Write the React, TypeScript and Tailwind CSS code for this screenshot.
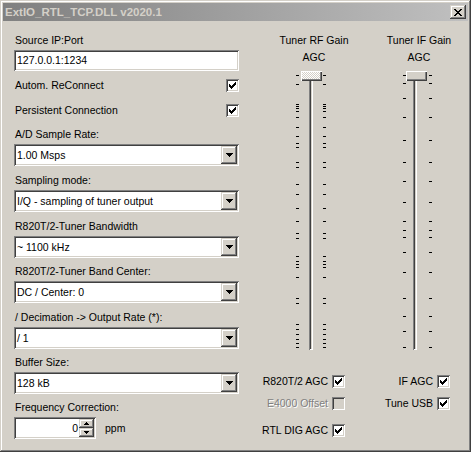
import type { ReactNode } from 'react';

const SUNKEN = 'shadow-[inset_1px_1px_#808080,inset_-1px_-1px_#ffffff,inset_2px_2px_#404040,inset_-2px_-2px_#d4d0c8]';
const RAISED = 'shadow-[inset_-1px_-1px_#404040,inset_1px_1px_#d4d0c8,inset_-2px_-2px_#808080,inset_2px_2px_#ffffff]';

// classic 7x7 check mark, one 3px column per x
const CHECK_PATH = [2, 3, 4, 3, 2, 1, 0].map((r, i) => `M${i} ${r}h1v3h-1z`).join('');

// tick marks as page y, the slider starts at y=70
const RF_TICKS = [75, 84, 104, 106, 108, 111, 117, 127, 136, 143, 147, 162, 167, 184, 194, 208, 221, 233, 238, 256, 261, 264, 267, 277, 298, 303, 324, 329, 334, 339, 343, 347];
const IF_TICKS = [75, 83, 98, 117, 140, 162, 181, 202, 221, 230, 237, 252, 272, 298, 316, 331, 347];

function Check({ on = true, disabled = false }: { on?: boolean; disabled?: boolean }) {
    return (
        <span className={`flex h-[13px] w-[13px] shrink-0 items-center justify-center ${disabled ? 'bg-[#d4d0c8]' : 'bg-white'} ${SUNKEN}`}>
            {on && (
                <svg width="7" height="7" viewBox="0 0 7 7" shapeRendering="crispEdges">
                    <path d={CHECK_PATH} fill="#000" />
                </svg>
            )}
        </span>
    );
}

function Label({ children, className = '' }: { children: ReactNode; className?: string }) {
    return <div className={`h-[13px] pl-[1px] whitespace-nowrap ${className}`}>{children}</div>;
}

function Select({ value }: { value: string }) {
    return (
        <div className={`mt-[3px] flex h-[22px] w-[225px] items-center bg-white p-[2px] ${SUNKEN}`}>
            <span className="flex-1 truncate pl-[1px]">{value}</span>
            <span className={`flex h-[18px] w-[16px] items-center justify-center bg-[#d4d0c8] ${RAISED}`}>
                <svg width="7" height="4" viewBox="0 0 7 4" shapeRendering="crispEdges">
                    <path d="M0 0h7v1H0zM1 1h5v1H1zM2 2h3v1H2zM3 3h1v1H3z" fill="#000" />
                </svg>
            </span>
        </div>
    );
}

function Field({ label, value, className = '' }: { label: string; value: string; className?: string }) {
    return (
        <div className={`flex flex-col ${className}`}>
            <Label>{label}</Label>
            <Select value={value} />
        </div>
    );
}

function SpinButton({ up }: { up?: boolean }) {
    return (
        <span className={`flex h-[9px] w-[15px] items-center justify-center bg-[#d4d0c8] ${RAISED}`}>
            <svg width="5" height="3" viewBox="0 0 5 3" shapeRendering="crispEdges">
                <path d={up ? 'M2 0h1v1H2zM1 1h3v1H1zM0 2h5v1H0z' : 'M0 0h5v1H0zM1 1h3v1H1zM2 2h1v1H2z'} fill="#000" />
            </svg>
        </span>
    );
}

type TrackbarProps = {
    ticks: number[];
    hatched?: boolean;
    className: string;
    thumbClass: string;
    trackClass: string;
    rightTickClass: string;
};

function Trackbar({ ticks, hatched, className, thumbClass, trackClass, rightTickClass }: TrackbarProps) {
    return (
        <div className={`relative h-[282px] w-[30px] ${className}`}>
            <div className={`absolute top-[3px] h-[277px] w-[4px] bg-[#d4d0c8] ${trackClass} ${SUNKEN}`} />
            {ticks.map((y) => (
                <div key={y}>
                    <div className="absolute left-0 h-[1px] w-[3px] bg-black" style={{ top: y - 70 }} />
                    <div className={`absolute h-[1px] w-[3px] bg-black ${rightTickClass}`} style={{ top: y - 70 }} />
                </div>
            ))}
            <div
                className={`absolute top-[1px] h-[10px] w-[21px] ${thumbClass} ${
                    hatched
                        ? 'bg-[image:repeating-conic-gradient(#ffffff_0%_25%,#d4d0c8_0%_50%)] bg-[length:2px_2px]'
                        : 'bg-[#d4d0c8]'
                } shadow-[inset_1px_1px_#ffffff,inset_-1px_-1px_#404040,inset_-2px_-2px_#808080]`}
            />
        </div>
    );
}

function RightCheck({ label, disabled, className = '' }: { label: string; disabled?: boolean; className?: string }) {
    return (
        <div className={`flex h-[13px] shrink-0 items-center gap-[4px] whitespace-nowrap ${className}`}>
            <span className={disabled ? 'text-[#808080] [text-shadow:1px_1px_0_#ffffff]' : ''}>{label}</span>
            <Check on={!disabled} disabled={disabled} />
        </div>
    );
}

export default function App() {
    return (
        <div
            className={`h-[452px] w-[471px] overflow-hidden bg-[#d4d0c8] font-['Liberation_Sans',Arial,sans-serif] text-[10.5px] leading-[13px] text-black ${RAISED}`}
        >
            {/* Title bar */}
            <div className="mx-[3px] mt-[3px] flex h-[18px] items-center bg-linear-to-r from-[#808080] to-[#c0c0c0]">
                <span className="flex-1 pl-[2px] text-[11.5px] font-bold text-[#d4d0c8]">ExtIO_RTL_TCP.DLL v2020.1</span>
                <span className={`mr-[2px] flex h-[14px] w-[16px] items-center justify-center bg-[#d4d0c8] ${RAISED}`}>
                    <svg width="8" height="7" viewBox="0 0 8 7" shapeRendering="crispEdges">
                        <path
                            d="M0 0h2v1H0zM6 0h2v1H6zM1 1h2v1H1zM5 1h2v1H5zM2 2h4v1H2zM3 3h2v1H3zM2 4h4v1H2zM1 5h2v1H1zM5 5h2v1H5zM0 6h2v1H0zM6 6h2v1H6z"
                            fill="#000"
                        />
                    </svg>
                </span>
            </div>

            <div className="flex pt-[13px] pl-[14px]">
                {/* Left column */}
                <div className="flex w-[225px] flex-col">
                    <Label>Source IP:Port</Label>
                    <div className={`mt-[3px] flex h-[21px] items-center bg-white px-[3px] ${SUNKEN}`}>127.0.0.1:1234</div>
                    <div className="mt-[8px] flex h-[13px] items-center justify-between">
                        <Label>Autom. ReConnect</Label>
                        <Check />
                    </div>
                    <div className="mt-[12px] flex h-[13px] items-center justify-between">
                        <Label>Persistent Connection</Label>
                        <Check />
                    </div>
                    <Field className="mt-[11px]" label="A/D Sample Rate:" value="1.00 Msps" />
                    <Field className="mt-[8px]" label="Sampling mode:" value="I/Q - sampling of tuner output" />
                    <Field className="mt-[8px]" label="R820T/2-Tuner Bandwidth" value="~ 1100 kHz" />
                    <Field className="mt-[7px]" label="R820T/2-Tuner Band Center:" value="DC / Center: 0" />
                    <Field className="mt-[8px]" label="/ Decimation -> Output Rate (*):" value="/ 1" />
                    <Field className="mt-[7px]" label="Buffer Size:" value="128 kB" />
                    <Label className="mt-[7px]">Frequency Correction:</Label>
                    <div className="mt-[3px] flex items-center">
                        <div className={`flex h-[22px] w-[82px] items-center bg-white p-[2px] ${SUNKEN}`}>
                            <span className="flex-1 pr-[1px] text-right">0</span>
                            <span className="flex flex-col">
                                <SpinButton up />
                                <SpinButton />
                            </span>
                        </div>
                        <span className="ml-[9px]">ppm</span>
                    </div>
                </div>

                {/* Gain sliders */}
                <div className="ml-[35px] flex gap-[25px]">
                    <div className="flex w-[80px] flex-col">
                        <div className="h-[13px] text-center whitespace-nowrap">Tuner RF Gain</div>
                        <div className="mt-[4px] h-[13px] text-center">AGC</div>
                        <Trackbar
                            ticks={RF_TICKS}
                            hatched
                            className="mt-[6px] ml-[22px]"
                            thumbClass="left-[5px]"
                            trackClass="left-[13px]"
                            rightTickClass="left-[27px]"
                        />
                        <div className="mt-[23px] flex flex-col items-end pr-[9px]">
                            <RightCheck label="R820T/2 AGC" />
                            <RightCheck className="mt-[9px]" label="E4000 Offset" disabled />
                            <RightCheck className="mt-[14px]" label="RTL DIG AGC" />
                        </div>
                    </div>
                    <div className="flex w-[80px] flex-col">
                        <div className="h-[13px] text-center whitespace-nowrap">Tuner IF Gain</div>
                        <div className="mt-[4px] h-[13px] text-center">AGC</div>
                        <Trackbar
                            ticks={IF_TICKS}
                            className="mt-[6px] ml-[24px]"
                            thumbClass="left-[3px]"
                            trackClass="left-[10px]"
                            rightTickClass="left-[26px]"
                        />
                        <div className="mt-[23px] flex flex-col items-end pr-[9px]">
                            <RightCheck label="IF AGC" />
                            <RightCheck className="mt-[9px]" label="Tune USB" />
                        </div>
                    </div>
                </div>
            </div>
        </div>
    );
}
